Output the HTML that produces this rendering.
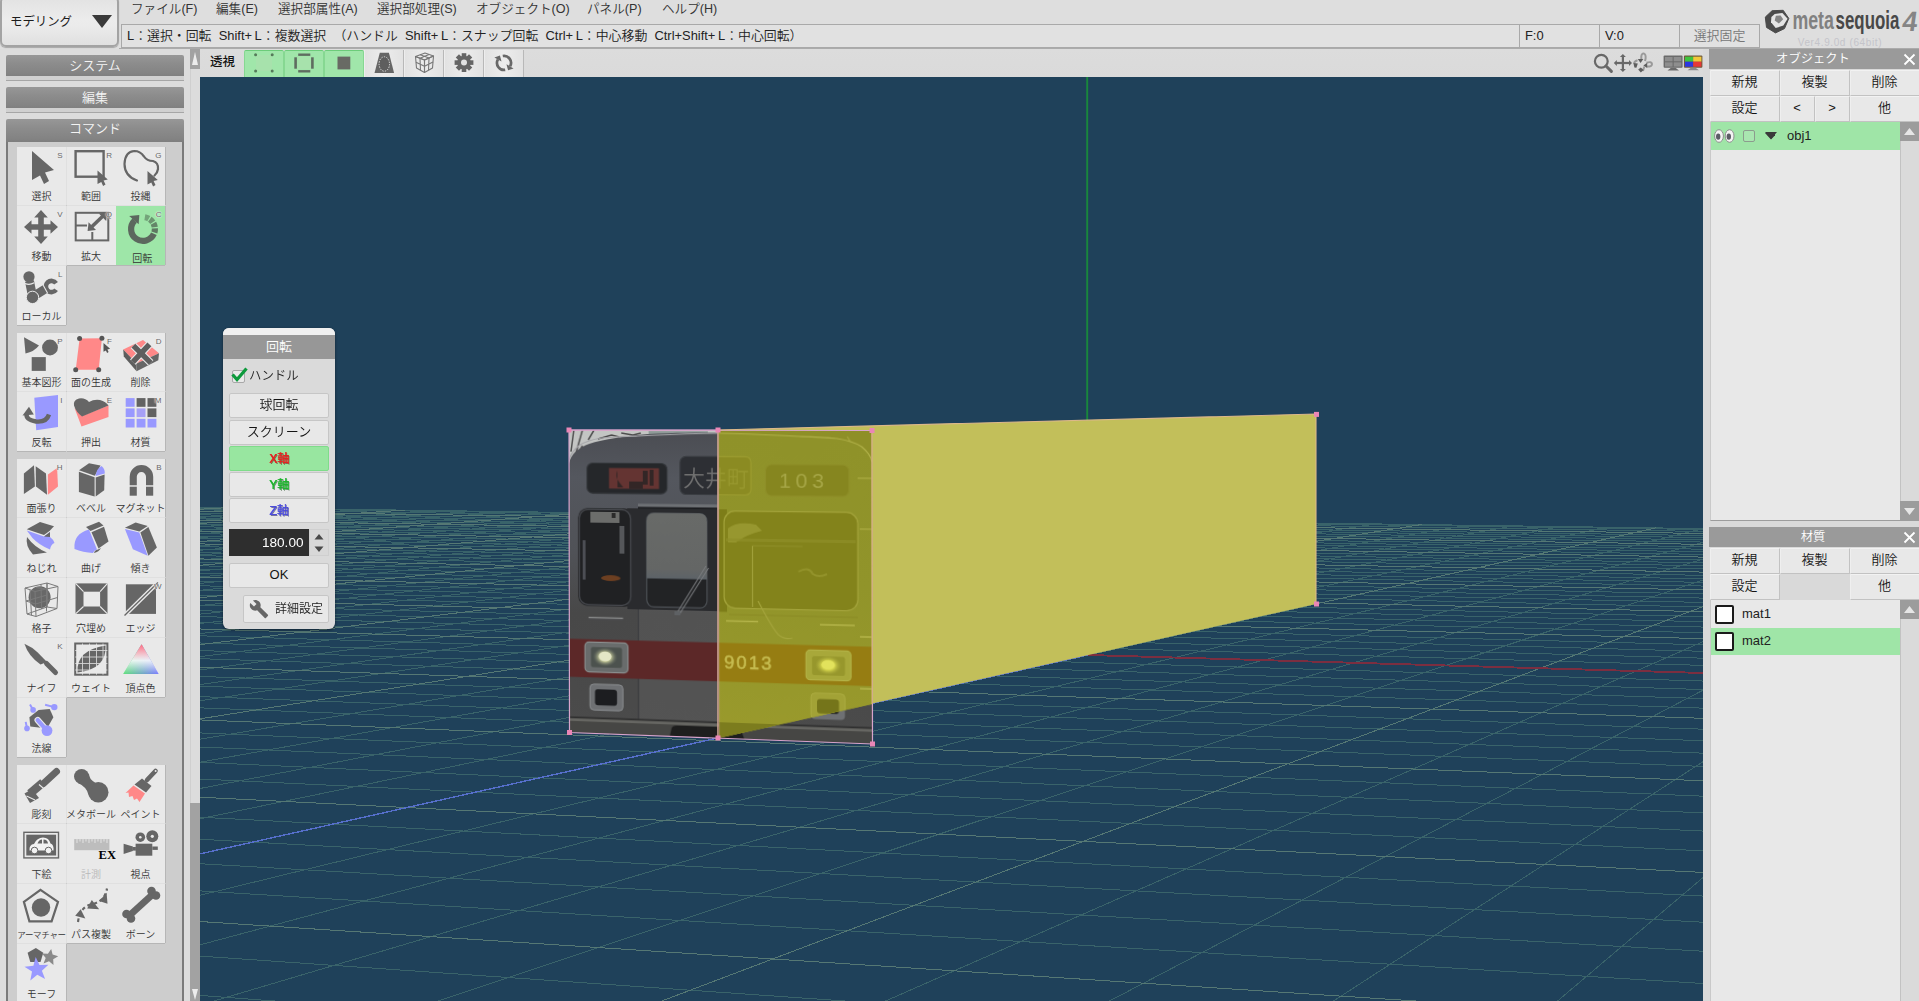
<!DOCTYPE html>
<html lang="ja"><head><meta charset="utf-8"><title>Metasequoia</title>
<style>
*{box-sizing:border-box}
html,body{margin:0;padding:0}
body{width:1919px;height:1001px;position:relative;overflow:hidden;background:#dcdcdc;font-family:"Liberation Sans","Noto Sans CJK JP",sans-serif;font-size:13px;color:#2a2a2a;font-weight:350}
.abs{position:absolute}
.menu span{position:absolute;top:0;height:18px;line-height:18px;font-size:12.6px;color:#333;white-space:nowrap}
.cell{position:absolute;top:24px;height:24px;border:1px solid #a9a9a9;background:#e1e1e1;font-size:12.9px;line-height:21px;padding-left:5px;white-space:nowrap;color:#222}
#stat i{font-style:normal;margin-left:2.6px}
.hdr{position:absolute;left:6px;width:178px;height:22px;border-radius:2px 2px 0 0;background:linear-gradient(#979797,#8c8c8c 40%,#838383 85%,#7e7e7e);color:#f4f4f4;font-size:13px;text-align:center;line-height:21px}
.hdrfoot{position:absolute;left:6px;width:178px;height:5px;background:#d0d0d0;border-bottom:1px solid #a6a6a6}
.grp{position:absolute;left:17px;width:149px;background:#cfcfcf;border-radius:2px;box-shadow:0 1px 0 #bdbdbd}
.ic{position:absolute;width:49px;height:59px;background:#e9e9e9;}
.ic.sel{background:#9ee6a8}
.ic svg{position:absolute;left:0;top:0}
.ic .lb{position:absolute;left:-6px;right:-6px;bottom:2px;text-align:center;font-size:10px;line-height:12px;color:#333;white-space:nowrap}
.ic .k{position:absolute;right:3.5px;top:4px;font-size:8px;line-height:9px;color:#686868;z-index:2;text-shadow:0 0 2px #eee,0 0 2px #eee,0 0 1px #eee}
.rbtn{position:absolute;height:26px;margin-left:-.5px;background:#e8e8e8;border:1px solid;border-color:#f2f2f2 #c2c2c2 #c2c2c2 #efefef;border-radius:1px;text-align:center;line-height:22px;font-size:13px;color:#151515}
.phdr{position:absolute;left:1709px;width:210px;height:20px;background:#9a9a9a;color:#fff;text-align:center;font-size:12.3px;line-height:21px;padding-right:2px}
.dbtn{position:absolute;left:6px;width:100px;height:25px;background:#e8e8e8;border:1px solid #c6c6c6;border-radius:2px;text-align:center;line-height:22px;font-size:13px;color:#151515}
.tb{position:absolute;top:50px;width:40px;height:27px;border-left:1px solid #ededed;border-right:1px solid #b8b8b8;background:linear-gradient(90deg,#e2e2e2,#ececec 50%,#e2e2e2)}
.tb.on{background:#a0e6aa;border:1px solid #86d892;border-top:1px solid #6ccc7a;border-bottom:none;border-radius:2px 2px 0 0}
</style></head><body>
<!-- ===== top bar ===== -->
<div class="abs" style="left:0;top:0;width:1919px;height:49px;background:#dedede"></div>
<div class="abs" style="left:0;top:-4px;width:119px;height:51px;border:2px solid #a3a3a3;border-radius:6px;background:linear-gradient(#e2e2e2,#ececec 45%,#ebebeb 60%,#e0e0e0);box-shadow:0 1px 1px rgba(0,0,0,.25)"></div>
<div class="abs" style="left:10px;top:13.6px;font-size:12.4px;line-height:16px;color:#1c1c1c;font-weight:400">モデリング</div>
<svg class="abs" style="left:91px;top:14px" width="22" height="16"><path d="M1 1H21L11 14Z" fill="#3a3a3a"/></svg>
<div class="abs" style="left:119px;top:48px;width:1800px;height:1px;background:#ababab"></div>
<div class="menu">
<span style="left:131px">ファイル(F)</span><span style="left:216px">編集(E)</span><span style="left:278px">選択部属性(A)</span><span style="left:377px">選択部処理(S)</span><span style="left:476px">オブジェクト(O)</span><span style="left:587px">パネル(P)</span><span style="left:662px">ヘルプ(H)</span>
</div>
<div class="cell" style="left:121px;width:1399px"><span id="stat" style="word-spacing:0">L：選択・回転&nbsp; Shift+<i>L</i>：複数選択 &nbsp;（ハンドル&nbsp; Shift+<i>L</i>：スナップ回転&nbsp; Ctrl+<i>L</i>：中心移動&nbsp; Ctrl+Shift+<i>L</i>：中心回転）</span></div>
<div class="cell" style="left:1519px;width:81px">F:0</div>
<div class="cell" style="left:1599px;width:81px">V:0</div>
<div class="cell" style="left:1679px;width:81px;text-align:center;padding-left:0;color:#777">選択固定</div>

<!-- ===== logo ===== -->
<svg class="abs" style="left:1762px;top:6px" width="157" height="44" viewBox="1762 6 157 44" font-family="'Liberation Sans',sans-serif">
<polygon points="1772.1,10.7 1783.2,10.3 1788.8,18.4 1784.5,28.6 1775.5,32.9 1766.5,27.4 1765.3,17.1" fill="#4b4b4b" stroke="#4b4b4b" stroke-width="1" stroke-linejoin="round"/>
<polygon points="1774.7,13.9 1782.4,13 1787.6,18.8 1783.4,25.6 1775.7,28 1771,22.2 1771.4,16.9" fill="#e4e4e4"/>
<polygon points="1775.9,15.8 1780.6,15.4 1783.2,19.2 1778.9,23.5 1774.7,20.5" fill="#838383"/>
<text x="1792.4" y="28.9" font-size="25" font-weight="bold" fill="#818181" textLength="41.5" lengthAdjust="spacingAndGlyphs">meta</text>
<text x="1835.6" y="28.9" font-size="25" font-weight="bold" fill="#484848" textLength="63.8" lengthAdjust="spacingAndGlyphs">sequoia</text>
<text x="1901.2" y="31.2" font-size="28" font-weight="bold" fill="#858585" transform="skewX(-8)" transform-origin="1901 31" textLength="15" lengthAdjust="spacingAndGlyphs">4</text>
<text x="1797.7" y="46" font-size="10" fill="#c4c4ca" textLength="83.8" lengthAdjust="spacing">Ver4.9.0d (64bit)</text>
</svg>

<!-- ===== left panel ===== -->
<div class="abs" style="left:0;top:49px;width:200px;height:952px;background:#dcdcdc"></div>
<div class="hdr" style="top:55px">システム</div><div class="hdrfoot" style="top:76px"></div>
<div class="hdr" style="top:87px">編集</div><div class="hdrfoot" style="top:108px"></div>
<div class="hdr" style="top:119px;height:23px;line-height:20px">コマンド</div>
<div class="abs" style="left:6px;top:142px;width:178px;height:860px;background:#cdcdcd;border-left:2px solid #7a7a7a;border-right:2px solid #7a7a7a"></div>
<!-- scrollbar -->
<div class="abs" style="left:190px;top:49px;width:10px;height:952px;background:#dcdcdc;border-left:1px solid #cfcfcf"></div>
<div class="abs" style="left:190px;top:49px;width:10px;height:20px;background:#a2a2a2"></div>
<svg class="abs" style="left:190px;top:51px" width="10" height="16"><path d="M5 1L8 14H2Z" fill="#ececec"/></svg>
<div class="abs" style="left:190px;top:803px;width:10px;height:198px;background:#a2a2a2"></div>
<svg class="abs" style="left:190px;top:988px" width="10" height="13"><path d="M5 12L8 1H2Z" fill="#ececec"/></svg>

<!-- icons -->
<div class="ic" style="left:17px;top:147px;height:58px;box-shadow:1px 0 0 #e0e0e0,0 1px 0 #e0e0e0"><svg width="49" height="42" viewBox="0 0 49 42"><polygon points="15.0,4.0 37.0,23.0 28.0,25.5 32.0,34.0 27.0,37.0 23.0,28.5 15.0,33.0" fill="#666"/></svg><span class="k">S</span><div class="lb">選択</div></div>
<div class="ic" style="left:66.5px;top:147px;height:58px;box-shadow:1px 0 0 #e0e0e0,0 1px 0 #e0e0e0"><svg width="49" height="42" viewBox="0 0 49 42"><rect x="8.6" y="4.2" width="28" height="25.5" fill="none" stroke="#666" stroke-width="2.4"/><polygon points="30.5,23.5 40.8,32.4 36.6,33.6 38.5,37.6 36.1,39.0 34.3,35.0 30.5,37.1" fill="#666"/></svg><span class="k">R</span><div class="lb">範囲</div></div>
<div class="ic" style="left:116px;top:147px;height:58px;box-shadow:1px 0 0 #b6b6b6,0 1px 0 #e0e0e0"><svg width="49" height="42" viewBox="0 0 49 42"><path d="M21 33.5Q8.5 29 8.5 17Q9 4.5 18.5 4Q24 4 28 9.5Q31 14 37 14Q42.5 15.5 42 22Q41.5 26 38.5 28.5" fill="none" stroke="#666" stroke-width="2.2" stroke-linecap="round"/><polygon points="31.5,24.0 41.8,32.9 37.6,34.1 39.5,38.1 37.1,39.5 35.3,35.5 31.5,37.6" fill="#666"/></svg><span class="k">G</span><div class="lb">投縄</div></div>
<div class="ic" style="left:17px;top:206px;height:59px;box-shadow:1px 0 0 #e0e0e0,0 1px 0 #e0e0e0"><svg width="49" height="42" viewBox="0 0 49 42"><polygon points="24.0,18.2 33.5,18.2 33.5,14.2 41.0,21.0 33.5,27.8 33.5,23.8 24.0,23.8" fill="#666"/><polygon points="26.8,21.0 26.8,30.5 30.8,30.5 24.0,38.0 17.2,30.5 21.2,30.5 21.2,21.0" fill="#666"/><polygon points="24.0,23.8 14.5,23.8 14.5,27.8 7.0,21.0 14.5,14.2 14.5,18.2 24.0,18.2" fill="#666"/><polygon points="21.2,21.0 21.2,11.5 17.2,11.5 24.0,4.0 30.8,11.5 26.8,11.5 26.8,21.0" fill="#666"/></svg><span class="k">V</span><div class="lb">移動</div></div>
<div class="ic" style="left:66.5px;top:206px;height:59px;box-shadow:1px 0 0 #e0e0e0,0 1px 0 #b6b6b6"><svg width="49" height="42" viewBox="0 0 49 42"><rect x="8.7" y="6.8" width="32.6" height="27.6" fill="none" stroke="#666" stroke-width="2"/><path d="M8.7 19.6H20M25.3 26V34.4" stroke="#666" stroke-width="2" fill="none"/><path d="M24.5 21L37 9" stroke="#666" stroke-width="3.6"/><polygon points="40.2,6.3 39.2,15 31.8,7.4" fill="#666"/><polygon points="20.6,25 21.6,16.2 29,24" fill="#666"/></svg><span class="k">Q</span><div class="lb">拡大</div></div>
<div class="ic sel" style="left:116px;top:206px;height:59px;box-shadow:1px 0 0 #b6b6b6,0 1px 0 #b6b6b6"><svg width="49" height="42" viewBox="0 0 49 42"><path d="M18.73 14.44A11.90 11.90 0 1 0 37.87 27.84" fill="none" stroke="#5c685e" stroke-width="6.2"/><polygon points="13.2,9.9 23.3,8.9 22.7,18.3" fill="#5c685e"/><path d="M38.38 26.48A11.90 11.90 0 0 0 38.88 22.38" fill="none" stroke="#5e7862" stroke-width="6.2"/><path d="M38.75 21.14A11.90 11.90 0 0 0 37.41 17.23" fill="none" stroke="#648568" stroke-width="6.2"/><path d="M36.75 16.17A11.90 11.90 0 0 0 33.83 13.25" fill="none" stroke="#6c9470" stroke-width="6.2"/><path d="M32.77 12.59A11.90 11.90 0 0 0 28.86 11.25" fill="none" stroke="#74a47a" stroke-width="6.2"/></svg><span class="k">C</span><div class="lb" style="bottom:0;left:0;right:-3.4px">回転</div></div>
<div class="ic" style="left:17px;top:266px;height:59px;box-shadow:1px 0 0 #b6b6b6,0 1px 0 #b6b6b6"><svg width="49" height="42" viewBox="0 0 49 42"><circle cx="12" cy="10.8" r="5.6" fill="#666"/><path d="M12.5 15L15 28" stroke="#666" stroke-width="9"/><path d="M8 17.5Q12.5 19.5 17.2 16.8" stroke="#e9e9e9" stroke-width="1.1" fill="none"/><path d="M17 30L29 22.5" stroke="#666" stroke-width="9"/><circle cx="15.5" cy="31.4" r="6.2" fill="#666" stroke="#e9e9e9" stroke-width="1"/><path d="M39.09 23.71A5.60 5.60 0 1 1 39.09 17.29" fill="none" stroke="#666" stroke-width="4.6"/><path d="M25.5 18L30.5 27" stroke="#e9e9e9" stroke-width="1.1"/></svg><span class="k">L</span><div class="lb">ローカル</div></div>
<div class="ic" style="left:17px;top:333px;height:58px;box-shadow:1px 0 0 #e0e0e0,0 1px 0 #e0e0e0"><svg width="49" height="42" viewBox="0 0 49 42"><path d="M7 4.3L22 12.6Q17 19 8.5 20.5Z" fill="#666"/><circle cx="33" cy="14.5" r="7.9" fill="#666"/><rect x="14.7" y="24.1" width="14.1" height="13.8" fill="#666"/></svg><span class="k">P</span><div class="lb">基本図形</div></div>
<div class="ic" style="left:66.5px;top:333px;height:58px;box-shadow:1px 0 0 #e0e0e0,0 1px 0 #e0e0e0"><svg width="49" height="42" viewBox="0 0 49 42"><polygon points="12.6,5.6 34.9,5.2 31.7,36.7 8.7,36.7" fill="#f88"/><circle cx="12.6" cy="5.6" r="2.5" fill="#555"/><circle cx="34.9" cy="5.2" r="2.5" fill="#555"/><circle cx="31.7" cy="36.7" r="2.5" fill="#555"/><circle cx="8.7" cy="36.7" r="2.5" fill="#555"/><polygon points="36.5,10.0 43.1,15.7 40.4,16.4 41.6,19.0 40.1,19.9 38.9,17.4 36.5,18.7" fill="#555"/></svg><span class="k">F</span><div class="lb">面の生成</div></div>
<div class="ic" style="left:116px;top:333px;height:58px;box-shadow:1px 0 0 #b6b6b6,0 1px 0 #e0e0e0"><svg width="49" height="42" viewBox="0 0 49 42"><polygon points="7.2,16.5 27,6.9 43,20.3 20.6,30.5" fill="#f88"/><polygon points="7.2,16.5 20.6,30.5 20.6,38.2 7.8,23.5" fill="#5e5e5e"/><polygon points="20.6,30.5 43,20.3 42.3,27.3 20.6,38.2" fill="#666"/><path d="M17.4 12.6L34.7 29.9M33.4 11.3L16.8 29.2" stroke="#e9e9e9" stroke-width="7.6"/><path d="M17.4 12.6L34.7 29.9M33.4 11.3L16.8 29.2" stroke="#5e5e5e" stroke-width="5.4"/></svg><span class="k">D</span><div class="lb">削除</div></div>
<div class="ic" style="left:17px;top:392px;height:59px;box-shadow:1px 0 0 #e0e0e0,0 1px 0 #b6b6b6"><svg width="49" height="42" viewBox="0 0 49 42"><polygon points="17.3,5.7 41,3.1 41,35.1 19.2,38.3" fill="#99f"/><path d="M32 22.5Q29.5 30.5 19 29.5Q9 28 9.5 22" fill="none" stroke="#666" stroke-width="4.4"/><polygon points="5.5,23.5 12,14.8 16.8,22.5" fill="#666"/></svg><span class="k">I</span><div class="lb">反転</div></div>
<div class="ic" style="left:66.5px;top:392px;height:59px;box-shadow:1px 0 0 #e0e0e0,0 1px 0 #b6b6b6"><svg width="49" height="42" viewBox="0 0 49 42"><path d="M7.5 16L14.5 34.5L41.5 25L41.5 13.5L15 24Z" fill="#f88"/><path d="M7 13.5Q6 8 12 6.5Q18 5.5 22 10Q27 7 33 8Q39 9.5 41.5 13.5L15 24.5Q9 20 7 13.5Z" fill="#666"/></svg><span class="k">E</span><div class="lb">押出</div></div>
<div class="ic" style="left:116px;top:392px;height:59px;box-shadow:1px 0 0 #b6b6b6,0 1px 0 #b6b6b6"><svg width="49" height="42" viewBox="0 0 49 42"><rect x="9.7" y="6.1" width="8.9" height="8.7" fill="#99f"/><rect x="20.6" y="6.1" width="8.9" height="8.7" fill="#626262"/><rect x="31.5" y="6.1" width="8.9" height="8.7" fill="#626262"/><rect x="9.7" y="16.4" width="8.9" height="8.7" fill="#99f"/><rect x="20.6" y="16.4" width="8.9" height="8.7" fill="#a6a0f6"/><rect x="31.5" y="16.4" width="8.9" height="8.7" fill="#626262"/><rect x="9.7" y="26.8" width="8.9" height="8.7" fill="#99f"/><rect x="20.6" y="26.8" width="8.9" height="8.7" fill="#99f"/><rect x="31.5" y="26.8" width="8.9" height="8.7" fill="#99f"/></svg><span class="k">M</span><div class="lb">材質</div></div>
<div class="ic" style="left:17px;top:459px;height:58px;box-shadow:1px 0 0 #e0e0e0,0 1px 0 #e0e0e0"><svg width="49" height="42" viewBox="0 0 49 42"><polygon points="6.9,14.6 17,6.2 17.9,27.5 6.9,34.9" fill="#666"/><polygon points="18.7,7.2 29,14.6 30,35.8 18.9,27.5" fill="#666"/><polygon points="30.9,15.5 40.1,9 41,27.5 30.9,35.8" fill="#f88"/></svg><span class="k">H</span><div class="lb">面張り</div></div>
<div class="ic" style="left:66.5px;top:459px;height:58px;box-shadow:1px 0 0 #e0e0e0,0 1px 0 #e0e0e0"><svg width="49" height="42" viewBox="0 0 49 42"><polygon points="11.9,12.7 27.6,18.2 27.6,37.6 11.9,33" fill="#666"/><polygon points="12,11.3 22,4.2 33.5,6.5 27.8,16.8" fill="#666"/><path d="M28.5 17Q30 9 34.5 7Q38 9.5 37.8 14.5Z" fill="#99f"/><polygon points="28.7,18.4 37.6,15.5 37.2,31.2 28.7,37.6" fill="#666"/></svg><div class="lb">ベベル</div></div>
<div class="ic" style="left:116px;top:459px;height:58px;box-shadow:1px 0 0 #b6b6b6,0 1px 0 #e0e0e0"><svg width="49" height="42" viewBox="0 0 49 42"><path d="M13.7 26.2V17.7A11.75 11.75 0 0 1 37.2 17.7V26.2H30V17.7A4.6 4.6 0 0 0 20.8 17.7V26.2Z" fill="#666"/><rect x="13.7" y="27.7" width="7.1" height="9" fill="#666"/><rect x="30" y="27.7" width="7.2" height="9" fill="#666"/></svg><span class="k">B</span><div class="lb">マグネット</div></div>
<div class="ic" style="left:17px;top:518px;height:59px;box-shadow:1px 0 0 #e0e0e0,0 1px 0 #e0e0e0"><svg width="49" height="42" viewBox="0 0 49 42"><path d="M10 19Q8 28 16 36.5L30 34.5Q18 30 10 19Z" fill="#666"/><polygon points="9.8,11.3 23,4 37,8.3 32.5,13 27,17" fill="#666"/><path d="M9.8 12.5L27 18.5L33 14L33 19Q37 22 37.5 25Q34 26 33 31.5Q22 27 15.5 20Z" fill="#99f"/><path d="M27 18.5L33 14V19Z" fill="#666"/></svg><div class="lb">ねじれ</div></div>
<div class="ic" style="left:66.5px;top:518px;height:59px;box-shadow:1px 0 0 #e0e0e0,0 1px 0 #e0e0e0"><svg width="49" height="42" viewBox="0 0 49 42"><path d="M7.5 31Q6 16 22 11.5L30 31.5Q27 32 26 35Q16 34.5 7.5 31Z" fill="#99f"/><polygon points="19,9 32,3.8 36.5,7.5 23.5,13" fill="#666"/><polygon points="24.5,14.2 37,8.8 41.5,23.5 31.5,30.5" fill="#666"/><path d="M27 35Q27.5 32 31 31.5L34 30Q32 34 27 35Z" fill="#666"/></svg><div class="lb">曲げ</div></div>
<div class="ic" style="left:116px;top:518px;height:59px;box-shadow:1px 0 0 #b6b6b6,0 1px 0 #e0e0e0"><svg width="49" height="42" viewBox="0 0 49 42"><polygon points="8.9,10.9 23.3,14.6 31.7,37.7 16.9,31.2" fill="#99f"/><polygon points="8.9,9.8 19.6,4.4 31.7,8.1 23.3,13.5" fill="#666"/><polygon points="24.4,14.6 32.4,8.9 40.9,29.4 32.4,37.7" fill="#666"/></svg><div class="lb">傾き</div></div>
<div class="ic" style="left:17px;top:578px;height:59px;box-shadow:1px 0 0 #e0e0e0,0 1px 0 #e0e0e0"><svg width="49" height="42" viewBox="0 0 49 42"><circle cx="22.6" cy="19.3" r="11" fill="#686868"/><g fill="none" stroke="#7a7a7a" stroke-width="1"><polygon points="8,10 30,5 30,29 10,36"/><polygon points="30,5 41,8.5 40,30.5 30,29"/><path d="M8 10L18 13.5L41 8.5M18 13.5L19 38.5L10 36M19 38.5L40 30.5M9 23L18.5 26L40.5 19.5M19 9.5L29.5 11L29.5 33.5M30 17L9 23M13 11.7L14.5 37.3M24 6.3L24.5 31"/></g></svg><div class="lb">格子</div></div>
<div class="ic" style="left:66.5px;top:578px;height:59px;box-shadow:1px 0 0 #e0e0e0,0 1px 0 #e0e0e0"><svg width="49" height="42" viewBox="0 0 49 42"><rect x="8.5" y="5.4" width="32" height="30.5" fill="#666"/><rect x="16.5" y="13.7" width="16.6" height="14.8" fill="#e9e9e9"/><path d="M8.5 5.4L16.5 13.7M40.5 5.4L33.1 13.7M8.5 35.9L16.5 28.5M40.5 35.9L33.1 28.5" stroke="#e9e9e9" stroke-width="1.1"/></svg><div class="lb">穴埋め</div></div>
<div class="ic" style="left:116px;top:578px;height:59px;box-shadow:1px 0 0 #b6b6b6,0 1px 0 #e0e0e0"><svg width="49" height="42" viewBox="0 0 49 42"><rect x="9.9" y="6.3" width="30.1" height="29.6" fill="#666"/><path d="M8.5 37.5L42 4.5" stroke="#e9e9e9" stroke-width="4"/><path d="M8.5 37.5L42 4.5" stroke="#666" stroke-width="1.3"/></svg><span class="k">W</span><div class="lb">エッジ</div></div>
<div class="ic" style="left:17px;top:638px;height:59px;box-shadow:1px 0 0 #e0e0e0,0 1px 0 #e0e0e0"><svg width="49" height="42" viewBox="0 0 49 42"><path d="M7.4 5.8Q15 9 20.7 14.6L30 23.9L23.5 26.6Q11.5 18.3 7.4 5.8Z" fill="#666"/><path d="M29.5 25.5L38.5 34.5" stroke="#666" stroke-width="5" stroke-linecap="round"/></svg><span class="k">K</span><div class="lb">ナイフ</div></div>
<div class="ic" style="left:66.5px;top:638px;height:59px;box-shadow:1px 0 0 #e0e0e0,0 1px 0 #b6b6b6"><svg width="49" height="42" viewBox="0 0 49 42"><rect x="8.2" y="5.5" width="32.2" height="31.2" fill="none" stroke="#666" stroke-width="2"/><path d="M10.5 34.5Q9 12 38.5 7.5Q40 31 10.5 34.5Z" fill="#666"/><path d="M15.5 5.5V36.7M22.5 5.5V36.7M29.5 5.5V36.7M36 5.5V36.7M8.2 12.5H40.4M8.2 19H40.4M8.2 25.5H40.4M8.2 32H40.4" stroke="#e9e9e9" stroke-width="0.9" opacity=".85"/></svg><div class="lb">ウェイト</div></div>
<div class="ic" style="left:116px;top:638px;height:59px;box-shadow:1px 0 0 #b6b6b6,0 1px 0 #b6b6b6"><svg width="49" height="42" viewBox="0 0 49 42"><defs><linearGradient id="vc1" x1="0" y1="1" x2="1" y2="1"><stop offset="0" stop-color="#5fe07a"/><stop offset="1" stop-color="#7c7cff"/></linearGradient><linearGradient id="vc2" x1="0" y1="0" x2="0" y2="1"><stop offset="0" stop-color="#ff6a80"/><stop offset=".55" stop-color="#fff" stop-opacity=".85"/><stop offset="1" stop-color="#fff" stop-opacity="0"/></linearGradient></defs><polygon points="25.6,6.3 42.7,35.9 7.1,35.9" fill="url(#vc1)"/><polygon points="25.6,6.3 42.7,35.9 7.1,35.9" fill="url(#vc2)"/></svg><div class="lb">頂点色</div></div>
<div class="ic" style="left:17px;top:698px;height:59px;box-shadow:1px 0 0 #b6b6b6,0 1px 0 #b6b6b6"><svg width="49" height="42" viewBox="0 0 49 42"><polygon points="21.6,11.9 32.7,11 36.4,19.3 30,30.4 13.3,28.5 12.4,19.3" fill="#666"/><g stroke="#99f" stroke-width="2" fill="#99f"><path d="M13 6.4L16.1 11.9M28.1 6.7L37.3 9.1M8.7 23.9L10 30.4"/></g><circle cx="16.1" cy="11.9" r="2.8" fill="#99f"/><circle cx="37.3" cy="9.1" r="3.2" fill="#99f"/><circle cx="10" cy="30.4" r="2.8" fill="#99f"/><path d="M20.7 22.1L30 32.6" stroke="#e9e9e9" stroke-width="6.4" stroke-linecap="round"/><path d="M20.7 22.1L30 32.6" stroke="#99f" stroke-width="4.2" stroke-linecap="round"/><circle cx="30" cy="32.6" r="5.4" fill="#99f"/></svg><div class="lb">法線</div></div>
<div class="ic" style="left:17px;top:765px;height:58px;box-shadow:1px 0 0 #e0e0e0,0 1px 0 #e0e0e0"><svg width="49" height="42" viewBox="0 0 49 42"><path d="M39.5 6.5L26.5 18.5" stroke="#666" stroke-width="7" stroke-linecap="round"/><path d="M26 17.5L13 28.5" stroke="#666" stroke-width="8.5"/><polygon points="7.5,28.5 15,24 22,33 13,38" fill="#666"/><path d="M22 19.5L29 25.5M9.5 31L18 35" stroke="#e9e9e9" stroke-width="1.1"/></svg><div class="lb">彫刻</div></div>
<div class="ic" style="left:66.5px;top:765px;height:58px;box-shadow:1px 0 0 #e0e0e0,0 1px 0 #e0e0e0"><svg width="49" height="42" viewBox="0 0 49 42"><circle cx="14.6" cy="11.5" r="7.6" fill="#666"/><circle cx="31.3" cy="27.2" r="10.2" fill="#666"/><path d="M11 18Q20 22 21.5 30L28 17.5Q22 14 22 9Z" fill="#666"/></svg><div class="lb">メタボール</div></div>
<div class="ic" style="left:116px;top:765px;height:58px;box-shadow:1px 0 0 #b6b6b6,0 1px 0 #e0e0e0"><svg width="49" height="42" viewBox="0 0 49 42"><path d="M39.5 6L31 15" stroke="#666" stroke-width="4.6" stroke-linecap="round"/><circle cx="39.6" cy="5.9" r="1" fill="#e9e9e9"/><polygon points="26,13.5 35.5,21 30,27.5 18.5,19.5" fill="#666"/><polygon points="17.5,20.5 29,28.5 23.5,37 21,33.5 18,35 16.5,31 13,32 12.5,27.5 9.5,28" fill="#f88"/></svg><div class="lb">ペイント</div></div>
<div class="ic" style="left:17px;top:824px;height:59px;box-shadow:1px 0 0 #e0e0e0,0 1px 0 #e0e0e0"><svg width="49" height="42" viewBox="0 0 49 42"><rect x="6.9" y="8.3" width="34.6" height="25.6" fill="none" stroke="#666" stroke-width="1.4"/><rect x="9.3" y="10.7" width="29.8" height="20.8" fill="#666"/><path d="M12.5 26.5Q12 20.5 17 20Q20 13.5 26 13.5Q32 13.5 33.5 19.5Q37 20.5 36.5 26.5Z" fill="#f2f2f2"/><circle cx="17.5" cy="26.5" r="3.3" fill="#f2f2f2" stroke="#666" stroke-width="1"/><circle cx="31.5" cy="26.5" r="3.3" fill="#f2f2f2" stroke="#666" stroke-width="1"/><path d="M20.5 19.5Q22 15.5 25 15.5V19.5ZM26.5 15.5Q30.5 15.5 31 19.5H26.5Z" fill="#666"/></svg><div class="lb">下絵</div></div>
<div class="ic" style="left:66.5px;top:824px;height:59px;box-shadow:1px 0 0 #e0e0e0,0 1px 0 #e0e0e0"><svg width="49" height="42" viewBox="0 0 49 42"><rect x="7.2" y="15.1" width="35.2" height="11.1" fill="#bdbdbd"/><path d="M10 15.1V19M13 15.1V17.5M16 15.1V19M19 15.1V17.5M22 15.1V19M25 15.1V17.5M28 15.1V19M31 15.1V17.5M34 15.1V19M37 15.1V17.5M40 15.1V19" stroke="#e4e4e4" stroke-width="1"/><text x="31.5" y="35" font-family="'Liberation Serif',serif" font-weight="bold" font-size="13.5" fill="#000" textLength="17.5" lengthAdjust="spacingAndGlyphs">EX</text></svg><div class="lb" style="color:#b8b8b8">計測</div></div>
<div class="ic" style="left:116px;top:824px;height:59px;box-shadow:1px 0 0 #b6b6b6,0 1px 0 #e0e0e0"><svg width="49" height="42" viewBox="0 0 49 42"><rect x="19.6" y="19.7" width="16.7" height="12" fill="#666"/><circle cx="24.3" cy="13.2" r="4.8" fill="#666"/><circle cx="36.3" cy="12.3" r="6" fill="#666"/><circle cx="24.3" cy="13.2" r="1.3" fill="#e9e9e9"/><circle cx="36.3" cy="12.3" r="1.6" fill="#e9e9e9"/><polygon points="7.6,19.7 16.9,22.5 16.9,27.1 7.6,29.9" fill="#666"/><rect x="16.9" y="23" width="3" height="3.6" fill="#666"/><rect x="36.3" y="22.5" width="5.5" height="3.4" fill="#666"/></svg><div class="lb">視点</div></div>
<div class="ic" style="left:17px;top:884px;height:59px;box-shadow:1px 0 0 #e0e0e0,0 1px 0 #e0e0e0"><svg width="49" height="42" viewBox="0 0 49 42"><polygon points="23.5,5.9 41,17.9 34.6,37.3 12.4,37.3 6.9,17.9" fill="none" stroke="#666" stroke-width="2.2" stroke-linejoin="miter"/><circle cx="24" cy="23.5" r="9.2" fill="#666"/></svg><div class="lb" style="font-size:8.5px;letter-spacing:-.3px">アーマチャー</div></div>
<div class="ic" style="left:66.5px;top:884px;height:59px;box-shadow:1px 0 0 #e0e0e0,0 1px 0 #b6b6b6"><svg width="49" height="42" viewBox="0 0 49 42"><path d="M11 38Q13 22 26 20Q38 17 40 4.5" fill="none" stroke="#666" stroke-width="2.2" stroke-dasharray="3.5 3"/><polygon points="8.2,31.8 18.3,34.6 13.7,25.3" fill="#666"/><polygon points="20.2,24.4 32.2,25.3 24.8,16.1" fill="#666"/><polygon points="32.2,17 40.5,19.8 39.6,8.7" fill="#666"/></svg><div class="lb">パス複製</div></div>
<div class="ic" style="left:116px;top:884px;height:59px;box-shadow:1px 0 0 #b6b6b6,0 1px 0 #b6b6b6"><svg width="49" height="42" viewBox="0 0 49 42"><path d="M14 31L36.5 10.5" stroke="#666" stroke-width="6.8"/><circle cx="10.5" cy="30" r="4.3" fill="#666"/><circle cx="15" cy="34.5" r="4.3" fill="#666"/><circle cx="35.5" cy="7" r="4.3" fill="#666"/><circle cx="40" cy="11.5" r="4.3" fill="#666"/></svg><div class="lb">ボーン</div></div>
<div class="ic" style="left:17px;top:944px;height:59px;box-shadow:1px 0 0 #b6b6b6,0 1px 0 #b6b6b6"><svg width="49" height="42" viewBox="0 0 49 42"><polygon points="10.6,8.7 18.9,4.1 26.3,8.7 23.5,18 13.3,18" fill="#666"/><polygon points="34.2,4.9 35.6,10.6 41.2,12.2 36.2,15.3 36.5,21.1 32.0,17.3 26.5,19.4 28.7,14.0 25.1,9.4 30.9,9.8" fill="#8a8a8a"/><polygon points="18.7,13.0 22.5,21.1 31.4,20.7 24.9,26.8 28.1,35.1 20.3,30.8 13.3,36.4 15.0,27.6 7.5,22.8 16.4,21.7" fill="#99f"/></svg><div class="lb">モーフ</div></div>
<!-- ===== viewport toolbar ===== -->
<div class="abs" style="left:200px;top:49px;width:1503px;height:28px;background:linear-gradient(#dcdcdc,#dadada)"></div>
<div class="abs" style="left:210px;top:53px;font-size:12.5px;line-height:18px;color:#111;font-weight:500">透視</div>
<div class="tb on" style="left:244px"></div><div class="tb on" style="left:284px"></div><div class="tb on" style="left:324px"></div>
<div class="tb" style="left:364px"></div><div class="tb" style="left:404px"></div><div class="tb" style="left:444px"></div><div class="tb" style="left:484px"></div>
<svg class="abs" style="left:244px;top:49px" width="282" height="28" viewBox="244 49 282 28">
<rect x="256" y="55" width="16" height="16" fill="#a9dfad" opacity=".7"/>
<g fill="#557a5a"><circle cx="255.6" cy="54.7" r="1.5"/><circle cx="272.2" cy="54.7" r="1.5"/><circle cx="255.6" cy="70.9" r="1.5"/><circle cx="272.2" cy="70.9" r="1.5"/></g>
<rect x="297.5" y="56.5" width="13.5" height="13" fill="#a9dfad" opacity=".7"/>
<g fill="#5f6c60"><rect x="298.2" y="53.5" width="12.1" height="2.4"/><rect x="298.2" y="70.1" width="12.1" height="2.4"/><rect x="294.3" y="57.3" width="2.6" height="11.4"/><rect x="311.1" y="57.3" width="2.6" height="11.4"/></g>
<rect x="337.5" y="56.6" width="12.8" height="12.8" fill="#686a64"/>
<polygon points="379.8,52.8 388.9,52.8 394.1,73 374.5,73" fill="#666"/>
<ellipse cx="384.3" cy="64" rx="5.2" ry="7.2" fill="#5e5e5e" stroke="#e4e4e4" stroke-width="1" stroke-dasharray="1.3 1.3"/>
<g fill="none" stroke="#777" stroke-width="1.1" stroke-linejoin="round"><polygon points="415.5,56.5 425,53 433.5,56 424.5,60"/><polygon points="415.5,56.5 424.5,60 424.5,72.5 416.5,68"/><polygon points="424.5,60 433.5,56 432.5,68 424.5,72.5"/><path d="M420.2 54.8L429 58M429 54.5L420 58.2M416 62.2L424.5 66.2L433 62M420 58.2L420.5 70.2M429 58L428.5 70.2"/></g>
<g transform="translate(464 62.6)"><g fill="#666"><rect x="-2.3" y="-9.4" width="4.6" height="18.8"/><rect x="-2.3" y="-9.4" width="4.6" height="18.8" transform="rotate(45)"/><rect x="-2.3" y="-9.4" width="4.6" height="18.8" transform="rotate(90)"/><rect x="-2.3" y="-9.4" width="4.6" height="18.8" transform="rotate(135)"/><circle r="6.8"/></g><circle r="3" fill="#e2e2e2"/></g>
<g fill="none" stroke="#686868" stroke-width="2.7"><path d="M502.78 56A7 7 0 0 1 510.06 66.4"/><path d="M505.2 69.8A7 7 0 0 1 497.94 59.4"/></g>
<polygon points="508.06,70.3 513.6,68.4 506.5,64.3" fill="#686868"/><polygon points="499.94,55.5 494.4,57.4 501.5,61.5" fill="#686868"/>
</svg>
<!-- nav icons -->
<svg class="abs" style="left:1590px;top:49px" width="114" height="28" viewBox="1590 49 114 28">
<circle cx="1601.3" cy="61.2" r="6.4" fill="none" stroke="#686868" stroke-width="2.2"/><path d="M1606 66L1611.4 71.4" stroke="#686868" stroke-width="3" stroke-linecap="round"/>
<g fill="#686868"><rect x="1616" y="61.9" width="14" height="2.2"/><rect x="1621.8" y="56" width="2.2" height="14"/><polygon points="1613.8,63 1616.8,60 1616.8,66"/><polygon points="1632,63 1629,60 1629,66"/><polygon points="1622.9,53.9 1619.9,56.9 1625.9,56.9"/><polygon points="1622.9,72.1 1619.9,69.1 1625.9,69.1"/></g>
<g fill="none" stroke="#9a9a9a" stroke-width="2"><path d="M1641.3 59.5V56.5Q1641.6 53.3 1644 53.6Q1646 54.2 1645.6 58.5L1645 61"/><path d="M1646.5 62.8Q1651.5 61 1652 64Q1652 66.8 1647 66.6"/><path d="M1637.5 60.2Q1634 61.3 1634.2 63.5"/><path d="M1644.3 66.5L1643 71"/></g>
<g fill="#5e5e5e"><polygon points="1637.8,59 1643.3,59 1640.6,63"/><polygon points="1633.4,63 1637.8,63.4 1636.4,67.8 1634.4,67.4"/><polygon points="1647.2,62.8 1647.2,68 1643.4,65.6"/><polygon points="1638.2,69.6 1640.8,67.6 1643.6,70 1640.8,72.6"/></g>
<rect x="1663.6" y="55.5" width="19" height="12.2" rx="1" fill="#6a6a6a"/><g fill="#8e8e8e"><rect x="1665" y="57" width="7.6" height="4.3"/><rect x="1673.7" y="57" width="7.6" height="4.3"/><rect x="1665" y="62.3" width="7.6" height="4.3"/><rect x="1673.7" y="62.3" width="7.6" height="4.3"/></g><polygon points="1671,67.7 1675.5,67.7 1679,70.5 1667.5,70.5" fill="#6a6a6a"/>
<rect x="1683.9" y="55.5" width="18.5" height="12.2" rx="1" fill="#6e5a3c"/><rect x="1685" y="56.7" width="8.2" height="5" fill="#3ec43e"/><rect x="1693.2" y="56.7" width="8.2" height="5" fill="#f2c83a"/><rect x="1685" y="61.7" width="8.2" height="5" fill="#2c38e0"/><rect x="1693.2" y="61.7" width="8.2" height="5" fill="#e63838"/><polygon points="1691,67.7 1695.5,67.7 1699,70.3 1687.5,70.3" fill="#8a8a8a"/>
</svg>

<!-- ===== viewport ===== -->
<svg id="vp" width="1503" height="924" viewBox="200 77 1503 924" style="position:absolute;left:200px;top:77px;background:#1f415a" shape-rendering="crispEdges">
<path d="M-29092.2 9284.7L-9352.0 1001.3M-20866.7 9281.5L-8741.8 969.1M-12641.3 9278.3L-8192.5 940.2M-4415.8 9275.0L-7695.3 914.0M12035.0 9268.6L-6830.2 868.3M20260.5 9265.3L-6451.6 848.4M28485.9 9262.1L-6103.2 830.0M36711.4 9258.9L-5781.6 813.1M53162.2 9252.4L-5207.0 782.8M61387.7 9249.2L-4949.4 769.2M69613.1 9245.9L-4708.9 756.5M77838.6 9242.7L-4483.9 744.6M79591.0 7964.1L-4074.8 723.1M47978.0 4866.2L-3888.2 713.2M34715.1 3566.5L-3712.3 704.0M27419.0 2851.5L-3546.1 695.2M19618.6 2087.1L-3240.0 679.0M17289.8 1858.9L-3098.7 671.6M15512.6 1684.7L-2964.4 664.5M14111.7 1547.4L-2836.7 657.8M12044.2 1344.8L-2599.1 645.3M11259.6 1268.0L-2488.3 639.4M10591.8 1202.5L-2382.5 633.8M10016.4 1146.1L-2281.3 628.5M9075.5 1053.9L-2091.5 618.5M8686.0 1015.8L-2002.4 613.8M8338.7 981.7L-1916.9 609.3M8027.1 951.2L-1834.7 605.0M7491.2 898.7L-1679.6 596.8M7259.0 875.9L-1606.3 592.9M7046.6 855.1L-1535.8 589.2M6851.6 836.0L-1467.7 585.6M6505.9 802.1L-1338.6 578.8M6351.9 787.0L-1277.3 575.6M6208.8 773.0L-1218.1 572.4M6075.4 759.9L-1160.8 569.4M5834.0 736.3L-1051.7 563.7M5724.4 725.5L-999.7 560.9M5621.4 715.4L-949.3 558.3M5524.4 705.9L-900.4 555.7M5346.4 688.5L-807.0 550.8M5264.5 680.5L-762.3 548.4M5186.9 672.9L-718.8 546.1M5113.2 665.6L-676.6 543.9M4976.5 652.2L-595.7 539.6M4912.9 646.0L-556.9 537.6M4852.3 640.1L-519.1 535.6M4794.5 634.4L-482.3 533.6M4686.2 623.8L-411.5 529.9M4635.5 618.8L-377.5 528.1M4586.8 614.1L-344.3 526.4M4540.2 609.5L-311.9 524.7M4452.3 600.9L-249.5 521.4M4410.9 596.8L-219.4 519.8M4371.0 592.9L-190.0 518.2M4332.6 589.1L-161.3 516.7M4259.9 582.0L-105.9 513.8M4225.4 578.6L-79.1 512.4M4192.1 575.4L-52.9 511.0M4160.0 572.2L-27.3 509.7M4098.8 566.2L22.3 507.0M4069.7 563.4L46.3 505.8M4055.4 562.0L58.1 505.2M89328.4 9238.2L3980.9 560.9M86077.6 9239.5L3907.2 559.9M82826.8 9240.7L3834.4 558.8M79575.9 9242.0L3762.5 557.8M73074.3 9244.6L3621.4 555.8M69823.5 9245.8L3552.1 554.8M66572.7 9247.1L3483.7 553.9M63321.9 9248.4L3416.0 552.9M56820.3 9251.0L3283.1 551.0M53569.4 9252.2L3217.8 550.1M50318.6 9253.5L3153.2 549.2M47067.8 9254.8L3089.5 548.3M40566.2 9257.3L2964.1 546.5M37315.4 9258.6L2902.4 545.6M34064.6 9259.9L2841.5 544.7M30813.7 9261.2L2781.2 543.9M24312.1 9263.7L2662.7 542.2M21061.3 9265.0L2604.5 541.4M17810.5 9266.3L2546.8 540.5M14559.7 9267.6L2489.8 539.7M8058.1 9270.1L2377.7 538.1M4807.2 9271.4L2322.5 537.3M1556.4 9272.7L2267.9 536.6M-1694.4 9273.9L2213.9 535.8M-8196.0 9276.5L2107.6 534.3M-11446.8 9277.8L2055.3 533.5M-14697.6 9279.1L2003.5 532.8M-17948.5 9280.3L1952.2 532.1M-24450.1 9282.9L1851.3 530.6M-27700.9 9284.2L1801.6 529.9M-30951.7 9285.4L1752.5 529.2M-34202.5 9286.7L1703.8 528.5M-29974.2 7067.3L1607.9 527.2M-25707.3 5777.0L1560.6 526.5M-22822.7 4904.7L1513.9 525.8M-20742.4 4275.6L1467.6 525.2M-17942.4 3428.9L1376.3 523.9M-16955.3 3130.3L1331.3 523.3M-16144.8 2885.3L1286.8 522.6M-15467.6 2680.4L1242.7 522.0M-14399.7 2357.5L1155.7 520.8M-13971.3 2228.0L1112.8 520.1M-13595.9 2114.5L1070.4 519.5M-13264.3 2014.2L1028.3 518.9M-12704.7 1845.0L945.4 517.8M-12466.5 1772.9L904.5 517.2M-12250.9 1707.7L863.9 516.6M-12054.6 1648.4L823.8 516.0M-11710.9 1544.4L744.6 514.9M-11559.5 1498.6L705.5 514.4M-11419.7 1456.4L666.8 513.8M-11290.2 1417.2L628.4 513.3M-11057.8 1346.9L552.7 512.2M-10953.1 1315.3L515.4 511.7M-10855.2 1285.6L478.3 511.1M-10763.3 1257.9L441.6 510.6M-10595.7 1207.2L369.2 509.6M-10519.1 1184.0L333.4 509.1M-10446.7 1162.1L298.0 508.6M-10378.2 1141.4L262.8 508.1M-10251.7 1103.1L193.4 507.1M-10193.1 1085.4L159.2 506.6M-10137.4 1068.6L125.2 506.1M-10084.4 1052.6L91.5 505.6" stroke="#39636a" stroke-width="1" fill="none"/>
<path d="M-37317.6 9287.9L-10033.8 1037.3M3809.6 9271.8L-7243.1 890.1M44936.8 9255.6L-5483.7 797.3M86064.0 9239.5L-4273.0 733.5M22802.5 2399.1L-3388.9 686.9M12979.0 1436.4L-2715.1 651.4M9515.5 1097.0L-2184.4 623.4M7746.1 923.6L-1755.6 600.8M6672.0 818.4L-1402.0 582.1M5950.7 747.7L-1105.4 566.5M5432.9 697.0L-853.0 553.2M5043.1 658.8L-635.6 541.7M4739.1 629.0L-446.4 531.8M4495.4 605.1L-280.3 523.0M4295.6 585.5L-133.3 515.2M4128.9 569.2L-2.2 508.3M92579.2 9236.9L4055.4 562.0M76325.1 9243.3L3691.5 556.8M60071.1 9249.7L3349.1 551.9M43817.0 9256.1L3026.4 547.4M27562.9 9262.5L2721.6 543.0M11308.9 9268.8L2433.4 538.9M-4945.2 9275.2L2160.5 535.0M-21199.3 9281.6L1901.5 531.4M-36930.5 9170.9L1655.6 527.9M-19171.1 3800.4L1421.7 524.5M-14893.1 2506.7L1199.0 521.4M-12969.1 1924.9L986.6 518.4M-11875.4 1594.2L784.0 515.5M-11169.8 1380.8L590.4 512.7M-10677.0 1231.8L405.2 510.1M-10313.3 1121.8L228.0 507.6M-10033.8 1037.3L58.1 505.2" stroke="#557874" stroke-width="1" fill="none"/>
<line x1="1088.0" y1="655.0" x2="14570.0" y2="1049.5" stroke="#7c2e40" stroke-width="1.9"/>
<line x1="1088.0" y1="655.0" x2="-9640.0" y2="3058.0" stroke="#566fcb" stroke-width="1.4"/>
<line x1="1087.2" y1="655" x2="1087.2" y2="70" stroke="#19873c" stroke-width="1.9" shape-rendering="geometricPrecision"/>
<polygon points="718,430 1316,414 1316,604 718,738" fill="#c2bf5a" shape-rendering="geometricPrecision"/>
</svg>
<div class="abs" style="left:0;top:0;width:304px;height:308px;transform-origin:0 0;transform:matrix3d(0.89605808,-0.048046637,0,-0.00011542712,0.0017304427,0.98228057,0,1.880001e-07,0,0,1,0,569,430,0,1)"><svg width="304" height="308" viewBox="0 0 304 308" style="display:block;font-family:'Liberation Sans','Noto Sans CJK JP',sans-serif">
<defs>
<linearGradient id="bodyg" x1="0" y1="0" x2="0" y2="1"><stop offset="0" stop-color="#4b4d53"/><stop offset=".15" stop-color="#54575e"/><stop offset=".4" stop-color="#505257"/><stop offset=".6" stop-color="#484848"/><stop offset="1" stop-color="#4b4b4b"/></linearGradient>
<linearGradient id="bodyo" x1="0" y1="0" x2="0" y2="1"><stop offset="0" stop-color="#8f9229"/><stop offset=".5" stop-color="#91942a"/><stop offset="1" stop-color="#9a9a2c"/></linearGradient>
<linearGradient id="blindg" x1="0" y1="0" x2="0" y2="1"><stop offset="0" stop-color="#686a68"/><stop offset=".85" stop-color="#646665"/><stop offset="1" stop-color="#5c6268"/></linearGradient>
<radialGradient id="lampg"><stop offset="0" stop-color="#e6e8c8"/><stop offset=".45" stop-color="#c8cc9c"/><stop offset="1" stop-color="#5a625a" stop-opacity="0"/></radialGradient>
<radialGradient id="lampo"><stop offset="0" stop-color="#e6e660"/><stop offset=".5" stop-color="#d2d24a"/><stop offset="1" stop-color="#a5a53a" stop-opacity="0"/></radialGradient>
<clipPath id="rclip"><polygon points="152,0 304,0 304,268.7 152,308"/></clipPath>
<clipPath id="lclip"><rect x="0" y="0" width="152" height="308"/></clipPath>
</defs>
<!-- ===== natural (gray) version, full width ===== -->
<rect width="304" height="308" fill="#c3c5c3"/>
<path d="M5 0L2 22M14 0L7 24M26 0L20 10M30 9L44 5L52 7M54 3L66 5L74 3M8 26L14 16" stroke="#4a4a4a" stroke-width="1.5" fill="none"/>
<rect x="82" y="1" width="60" height="3" fill="#8e9a98"/>
<path d="M0 308L0 34C2 24 10 18 21 14C35 9.5 60 5.5 81 4C110 2.5 131 2.5 152 2.5C173 3 204 4.5 233 6C244 6.3 254 6.5 270 8C280 9.5 288 12 294 16C299 20.5 302.5 24 304 31L304 308Z" fill="url(#bodyg)"/>
<path d="M0 31C1.5 24 5 20.5 10 16C16 12 24 9.5 34 8C50 6.5 60 6.3 71 6C100 4.5 131 3 152 3" stroke="#a4a4a8" stroke-width="1.2" fill="none"/>
<!-- window band dark -->
<rect x="9.2" y="79.3" width="58" height="99.5" rx="10" fill="#232426"/><rect x="60" y="79" width="92" height="102" fill="#2a2b2e"/>
<!-- door top rail -->
<rect x="71" y="74.3" width="81" height="3.4" fill="#6e7175"/>
<rect x="71" y="77.5" width="81" height="1.6" fill="#1c1d20"/>
<!-- left signs -->
<rect x="18.6" y="33.5" width="82" height="30.7" rx="6" fill="#25272a" stroke="#34373b" stroke-width="1.2"/>
<rect x="41.3" y="38.4" width="51.2" height="20.9" fill="#643432"/>
<path d="M50 41q-3 6 2 12l4 5h-6zM62 52h14v7h-14zM76 41h5v14h-5zM83 40h4v16h-4z" fill="#2a2424" opacity=".85"/>
<rect x="113.9" y="26.4" width="71.2" height="38.1" rx="6" fill="#2d2f34" stroke="#3a3d42" stroke-width="1.2"/>
<text x="117" y="56" font-size="21.5" fill="#707070" textLength="66" lengthAdjust="spacingAndGlyphs">大井町</text>
<!-- left window -->
<rect x="10.5" y="80.5" width="53" height="97" rx="9" fill="#202123" stroke="#45474c" stroke-width="1.4"/>
<rect x="22" y="83" width="30" height="11" fill="#6c6d6b"/>
<rect x="44" y="84" width="4" height="5" fill="#2a2a2a"/>
<rect x="52" y="97" width="5" height="28" fill="#55575a"/>
<ellipse cx="43" cy="150" rx="10" ry="3" fill="#a05420" opacity=".6"/>
<rect x="14" y="112" width="3" height="40" fill="#4c4e54"/>
<!-- center window -->
<rect x="79.8" y="83.6" width="61.1" height="94.5" rx="7" fill="#222325" stroke="#4c5055" stroke-width="1.2"/>
<path d="M79.8 149.6L79.8 92Q79.8 83.6 88 83.6L133 83.6Q140.9 83.6 140.9 92L140.9 149.6Z" fill="url(#blindg)"/>
<path d="M139.9 136L110.6 183.8M142.5 138L113 185" stroke="#77797c" stroke-width="1.1" fill="none"/>
<rect x="108" y="182" width="6" height="4" fill="#55585c"/>
<!-- below windows -->
<rect x="71.3" y="181" width="80.7" height="112" fill="#ffffff" opacity=".055"/>
<line x1="71.3" y1="181" x2="71.3" y2="293" stroke="#3c3d40" stroke-width="1.2"/>
<path d="M20 190.5L55.5 190.5" stroke="#8a8c8c" stroke-width="1.3"/><path d="M20 192L55.5 192" stroke="#4a4b4e" stroke-width="1"/>
<!-- red band -->
<rect x="0" y="212.5" width="304" height="38.7" fill="#5c2828"/>
<!-- headlight L -->
<rect x="16.2" y="215.4" width="44.3" height="30.2" rx="4" fill="#696c6c" stroke="#8a8e8e" stroke-width="1.2"/>
<rect x="22.4" y="220.3" width="32" height="20.4" rx="2" fill="#4c524e"/>
<ellipse cx="37" cy="230" rx="13" ry="10" fill="url(#lampg)"/>
<ellipse cx="37" cy="229.5" rx="6.5" ry="4.8" fill="#e4e6c6"/>
<!-- taillight L -->
<rect x="21.3" y="257.9" width="34" height="26.3" rx="4" fill="#6e7073" stroke="#8c8f92" stroke-width="1"/>
<rect x="26.5" y="262.9" width="22.7" height="16.4" rx="3" fill="#1c1d20"/>
<!-- skirt -->
<rect x="0" y="292.5" width="304" height="16" fill="#464644"/>
<rect x="0" y="291.5" width="304" height="1.6" fill="#303030"/>
<rect x="0" y="293.5" width="304" height="2.6" fill="#6e6e6a" opacity=".8"/>
<path d="M103 308L105 299.6Q106 297 110 297L170 297Q174 297 175 299.6L178 308Z" fill="#1e1e1e"/>
<!-- right side natural bits (only visible under the diagonal) -->
<rect x="244.1" y="259.8" width="33.2" height="25.6" rx="4" fill="#6e7073"/>
<rect x="250" y="265.6" width="21.5" height="14.1" rx="3" fill="#1c1d20"/>
<!-- ===== olive version of right half ===== -->
<g clip-path="url(#rclip)">
<rect x="152" y="0" width="152" height="308" fill="#8e8f27"/>
<path d="M250 10Q262 4 276 12M262 14L284 22M280 6L288 20" stroke="#a8a840" stroke-width="1.1" fill="none"/>
<path d="M152 308L152 3C173 3 204 4.5 233 6C244 6.3 254 6.5 270 8C280 9.5 288 12 294 16C299 20.5 302.5 24 304 31L304 308Z" fill="url(#bodyo)"/>
<path d="M152 3C173 3 204 4.5 233 6C244 6.3 254 6.5 270 8C280 9.5 288 12 294 16C299 20.5 302.5 24 304 31" stroke="#b0b048" stroke-width="1.2" fill="none"/>
<!-- mid sign right part -->
<path d="M152 26.4L179 26.4Q185.1 26.4 185.1 32.4L185.1 58.5Q185.1 64.5 179 64.5L152 64.5Z" fill="#8b8b22" stroke="#9c9c30" stroke-width="1.2"/>
<text x="117" y="56" font-size="21.5" fill="#98982f" textLength="66" lengthAdjust="spacingAndGlyphs" clip-path="url(#rclip)">大井町</text>
<!-- 103 sign -->
<rect x="199.6" y="34" width="82" height="31.1" rx="6" fill="#86861f" stroke="#8e8e28" stroke-width="1.2"/>
<text x="213" y="57" font-size="21" fill="#a6a646" letter-spacing="4.6">103</text>
<path d="M290 47L304 47M292 97L304 97" stroke="#b2b248" stroke-width="1.2"/>
<rect x="152" y="79" width="9" height="102.5" fill="#7d7d18"/>
<!-- right window -->
<rect x="158.1" y="80.7" width="132" height="96.9" rx="11" fill="#83831b" stroke="#a2a23a" stroke-width="1.3"/>
<path d="M162 98Q172 90 190 94L196 100Q180 104 170 112L162 112Z" fill="#9c9c34" opacity=".8"/>
<rect x="160" y="108" width="128" height="3" fill="#8e8e28" opacity=".7"/>
<path d="M186.5 115L186.5 176" stroke="#a0a03a" stroke-width="1.2"/>
<path d="M186.5 115L236 115" stroke="#8f8f2a" stroke-width="1"/>
<path d="M232 140q10 -6 14 2q6 4 14 0" stroke="#97972f" stroke-width="2" fill="none" opacity=".8"/>
<path d="M163 184L290 184" stroke="#8a8a24" stroke-width="1"/>
<!-- handrails, wiper -->
<path d="M160 190.5L192 190.5M253 192L287 192M292 203L304 203M292 254L304 254" stroke="#b4b44a" stroke-width="1.3"/>
<path d="M192 170Q205 195 212 203Q218 208 226 206" stroke="#a4a43c" stroke-width="1.2" fill="none"/>
<!-- orange band -->
<rect x="152" y="212.5" width="152" height="38.7" fill="#967d12"/>
<text x="158" y="238.4" font-size="19" fill="#c6bc50" stroke="#c6bc50" stroke-width=".55" letter-spacing="2.2" textLength="49.5" lengthAdjust="spacingAndGlyphs">9013</text>
<!-- headlight R -->
<rect x="239.3" y="217.4" width="43.9" height="29.3" rx="4" fill="#a8a83a" stroke="#b2b246" stroke-width="1.2"/>
<rect x="245.2" y="223.2" width="32.2" height="18.8" rx="2" fill="#97972c"/>
<ellipse cx="261" cy="232" rx="13" ry="9.5" fill="url(#lampo)"/>
<ellipse cx="261" cy="231.5" rx="6.5" ry="4.6" fill="#e2e25c"/>
<!-- taillight R -->
<rect x="244.1" y="259.8" width="33.2" height="25.6" rx="4" fill="#a2a236" stroke="#acac42" stroke-width="1"/>
<rect x="250" y="265.6" width="21.5" height="14.1" rx="3" fill="#75751a"/>
<!-- skirt olive -->
<rect x="152" y="292" width="152" height="16" fill="#7c7c1e"/>
<line x1="152.6" y1="0" x2="152.6" y2="308" stroke="#c8a091" stroke-width="1"/>
</g>
</svg>
</div>
<svg class="abs" style="left:200px;top:77px" width="1503" height="924" viewBox="200 77 1503 924">
<g fill="none" stroke="#d9a4cc" stroke-width="1.2"><polygon points="569,430 872,430.5 872.5,744 569.5,732.5"/></g>
<g fill="none" stroke="#dcb88a" stroke-width="1.1"><path d="M718 430L1316 414L1316 604"/><path d="M717.7 430V738" stroke="#c8a091"/><path d="M872 430.5V704" stroke="#ccb658"/></g>
<path d="M569 430L718 430" stroke="#d9a4cc" stroke-width="1.2"/>
<rect x="566.5" y="427.5" width="5" height="5" fill="#ea86b6"/>
<rect x="715.5" y="427.5" width="5" height="5" fill="#ea86b6"/>
<rect x="869.5" y="428.0" width="5" height="5" fill="#ea86b6"/>
<rect x="567.0" y="730.0" width="5" height="5" fill="#ea86b6"/>
<rect x="715.5" y="735.5" width="5" height="5" fill="#ea86b6"/>
<rect x="870.0" y="741.5" width="5" height="5" fill="#ea86b6"/>
<rect x="1314.0" y="411.9" width="5" height="5" fill="#ea86b6"/>
<rect x="1314.0" y="601.5" width="5" height="5" fill="#ea86b6"/>
</svg>
<!-- ===== rotate dialog ===== -->
<div class="abs" id="dlg" style="left:223px;top:328px;width:112px;height:301px;background:#dadada;border-radius:6px;box-shadow:0 1px 3px rgba(0,0,0,.45);overflow:hidden">
<div class="abs" style="left:0;top:0;width:112px;height:8px;background:#f0f0f0"></div>
<div class="abs" style="left:0;top:7px;width:112px;height:24px;background:#979797;color:#fff;text-align:center;font-size:13px;line-height:23px">回転</div>
<div class="abs" style="left:9px;top:42px;width:13px;height:13px;border:1px solid #a8a8a8;background:#e9e9e9;border-radius:2px"></div>
<svg class="abs" style="left:7px;top:37px" width="20" height="18"><path d="M2.5 9.5L7 14.5L16.5 3.5" stroke="#0d9a3c" stroke-width="3.2" fill="none"/></svg>
<div class="abs" style="left:26px;top:39px;font-size:12.4px;line-height:18px;color:#222">ハンドル</div>
<div class="dbtn" style="top:65px">球回転</div>
<div class="dbtn" style="top:92px">スクリーン</div>
<div class="dbtn" style="top:118px;background:#98e6a0;border-color:#7fdc8a;color:#e62020;font-size:12px;line-height:25px;text-shadow:.7px 0 0 #e62020,1.2px 1px 0 rgba(70,10,10,.55)">X軸</div>
<div class="dbtn" style="top:144px;color:#1cb42c;font-size:12px;line-height:25px;text-shadow:.7px 0 0 #1cb42c,1.2px 1px 0 rgba(10,60,14,.55)">Y軸</div>
<div class="dbtn" style="top:170px;color:#4c4cdc;font-size:12px;line-height:25px;text-shadow:.7px 0 0 #4c4cdc,1.2px 1px 0 rgba(20,20,90,.55)">Z軸</div>
<div class="abs" style="left:6px;top:201px;width:80px;height:27px;background:#2e2e2e;color:#fff;font-size:13.6px;line-height:27px;text-align:right;padding-right:5.5px">180.00</div>
<div class="abs" style="left:86px;top:201px;width:20px;height:27px;background:#d8d8d8;border:1px solid #cfcfcf"></div>
<svg class="abs" style="left:90px;top:205px" width="12" height="20"><path d="M6 1L10.5 6.5H1.5Z M6 19L10.5 13.5H1.5Z" fill="#4a4a4a"/></svg>
<div class="dbtn" style="top:235px">OK</div>
<div class="dbtn" style="top:267px;left:20px;width:86px;height:28px"></div>
<svg class="abs" style="left:26px;top:271px" width="20" height="20" viewBox="0 0 24 24"><path d="M22.7 19l-9.1-9.1c.9-2.3.4-5-1.5-6.9-2-2-5-2.4-7.4-1.3L9 6 6 9 1.6 4.7C.4 7.1.9 10.1 2.9 12.1c1.9 1.9 4.6 2.4 6.9 1.5l9.1 9.1c.4.4 1 .4 1.4 0l2.3-2.3c.5-.4.5-1.1.1-1.4z" fill="#666"/></svg>
<div class="abs" style="left:52px;top:272px;font-size:12px;line-height:18px;color:#222">詳細設定</div>
</div>

<!-- ===== right panels ===== -->
<div class="abs" style="left:1703px;top:49px;width:216px;height:952px;background:#d9d9d9"></div>
<div class="phdr" style="top:49px">オブジェクト</div>
<svg class="abs" style="left:1903px;top:53px" width="13" height="13"><path d="M1.5 1.5L11.5 11.5M11.5 1.5L1.5 11.5" stroke="#fff" stroke-width="1.8"/></svg>
<div class="rbtn" style="left:1710px;top:70px;width:70px">新規</div>
<div class="rbtn" style="left:1780px;top:70px;width:70px">複製</div>
<div class="rbtn" style="left:1850px;top:70px;width:70px">削除</div>
<div class="rbtn" style="left:1710px;top:96px;width:70px">設定</div>
<div class="rbtn" style="left:1780px;top:96px;width:35px">&lt;</div>
<div class="rbtn" style="left:1815px;top:96px;width:35px">&gt;</div>
<div class="rbtn" style="left:1850px;top:96px;width:70px">他</div>
<div class="abs" style="left:1710px;top:122px;width:209px;height:399px;background:#e8e8e8;border-left:1px solid #c9c9c9;border-bottom:1px solid #9c9c9c"></div>
<div class="abs" style="left:1711px;top:122px;width:189px;height:28px;background:#9fe5a7"></div>
<svg class="abs" style="left:1713px;top:127px" width="62" height="18" viewBox="0 0 62 18">
<ellipse cx="6" cy="9" rx="4.4" ry="6.3" fill="#f4f4f4" stroke="#8e8e8e" stroke-width="1"/><ellipse cx="5.2" cy="9.6" rx="2.2" ry="3.2" fill="#5c5c66"/>
<ellipse cx="16.6" cy="9" rx="4.4" ry="6.3" fill="#f4f4f4" stroke="#8e8e8e" stroke-width="1"/><ellipse cx="15.8" cy="9.6" rx="2.2" ry="3.2" fill="#5c5c66"/>
<rect x="30.5" y="3.5" width="11" height="11" rx="1.5" fill="#a9e6b0" stroke="#8c9c8e" stroke-width="1"/>
<path d="M52 6H64L58 12.5Z" fill="#3c3c3c"/>
</svg>
<svg class="abs" style="left:1764px;top:131px" width="14" height="10"><path d="M1 1H13L7 8Z" fill="#3a3a3a"/></svg>
<div class="abs" style="left:1787px;top:127px;font-size:13px;line-height:17px;color:#222">obj1</div>
<!-- scrollbar obj -->
<div class="abs" style="left:1900px;top:122px;width:19px;height:398px;background:#dadada;border-left:1px solid #c2c2c2"></div>
<div class="abs" style="left:1900px;top:122px;width:19px;height:19px;background:#9c9c9c"></div>
<svg class="abs" style="left:1903px;top:127px" width="13" height="9"><path d="M6.5 1L12 8H1Z" fill="#e6e6e6"/></svg>
<div class="abs" style="left:1900px;top:501px;width:19px;height:19px;background:#9c9c9c"></div>
<svg class="abs" style="left:1903px;top:507px" width="13" height="9"><path d="M6.5 8L12 1H1Z" fill="#e6e6e6"/></svg>
<!-- material panel -->
<div class="phdr" style="top:527px">材質</div>
<svg class="abs" style="left:1903px;top:531px" width="13" height="13"><path d="M1.5 1.5L11.5 11.5M11.5 1.5L1.5 11.5" stroke="#fff" stroke-width="1.8"/></svg>
<div class="rbtn" style="left:1710px;top:548px;width:70px">新規</div>
<div class="rbtn" style="left:1780px;top:548px;width:70px">複製</div>
<div class="rbtn" style="left:1850px;top:548px;width:70px">削除</div>
<div class="rbtn" style="left:1710px;top:574px;width:70px">設定</div>
<div class="rbtn" style="left:1850px;top:574px;width:70px">他</div>
<div class="abs" style="left:1710px;top:600px;width:191px;height:401px;background:#e8e8e8;border-left:1px solid #c9c9c9"></div>
<div class="abs" style="left:1711px;top:628px;width:189px;height:27px;background:#9fe5a7"></div>
<div class="abs" style="left:1715px;top:605px;width:19px;height:19px;background:#fff;border:2px solid #1a1a1a;border-radius:2px"></div>
<div class="abs" style="left:1715px;top:632px;width:19px;height:19px;background:#fff;border:2px solid #1a1a1a;border-radius:2px"></div>
<div class="abs" style="left:1742px;top:605px;font-size:13px;line-height:17px;color:#222">mat1</div>
<div class="abs" style="left:1742px;top:632px;font-size:13px;line-height:17px;color:#222">mat2</div>
<div class="abs" style="left:1900px;top:600px;width:19px;height:401px;background:#dadada;border-left:1px solid #c2c2c2"></div>
<div class="abs" style="left:1900px;top:600px;width:19px;height:19px;background:#9c9c9c"></div>
<svg class="abs" style="left:1903px;top:605px" width="13" height="9"><path d="M6.5 1L12 8H1Z" fill="#e6e6e6"/></svg>

</body></html>
